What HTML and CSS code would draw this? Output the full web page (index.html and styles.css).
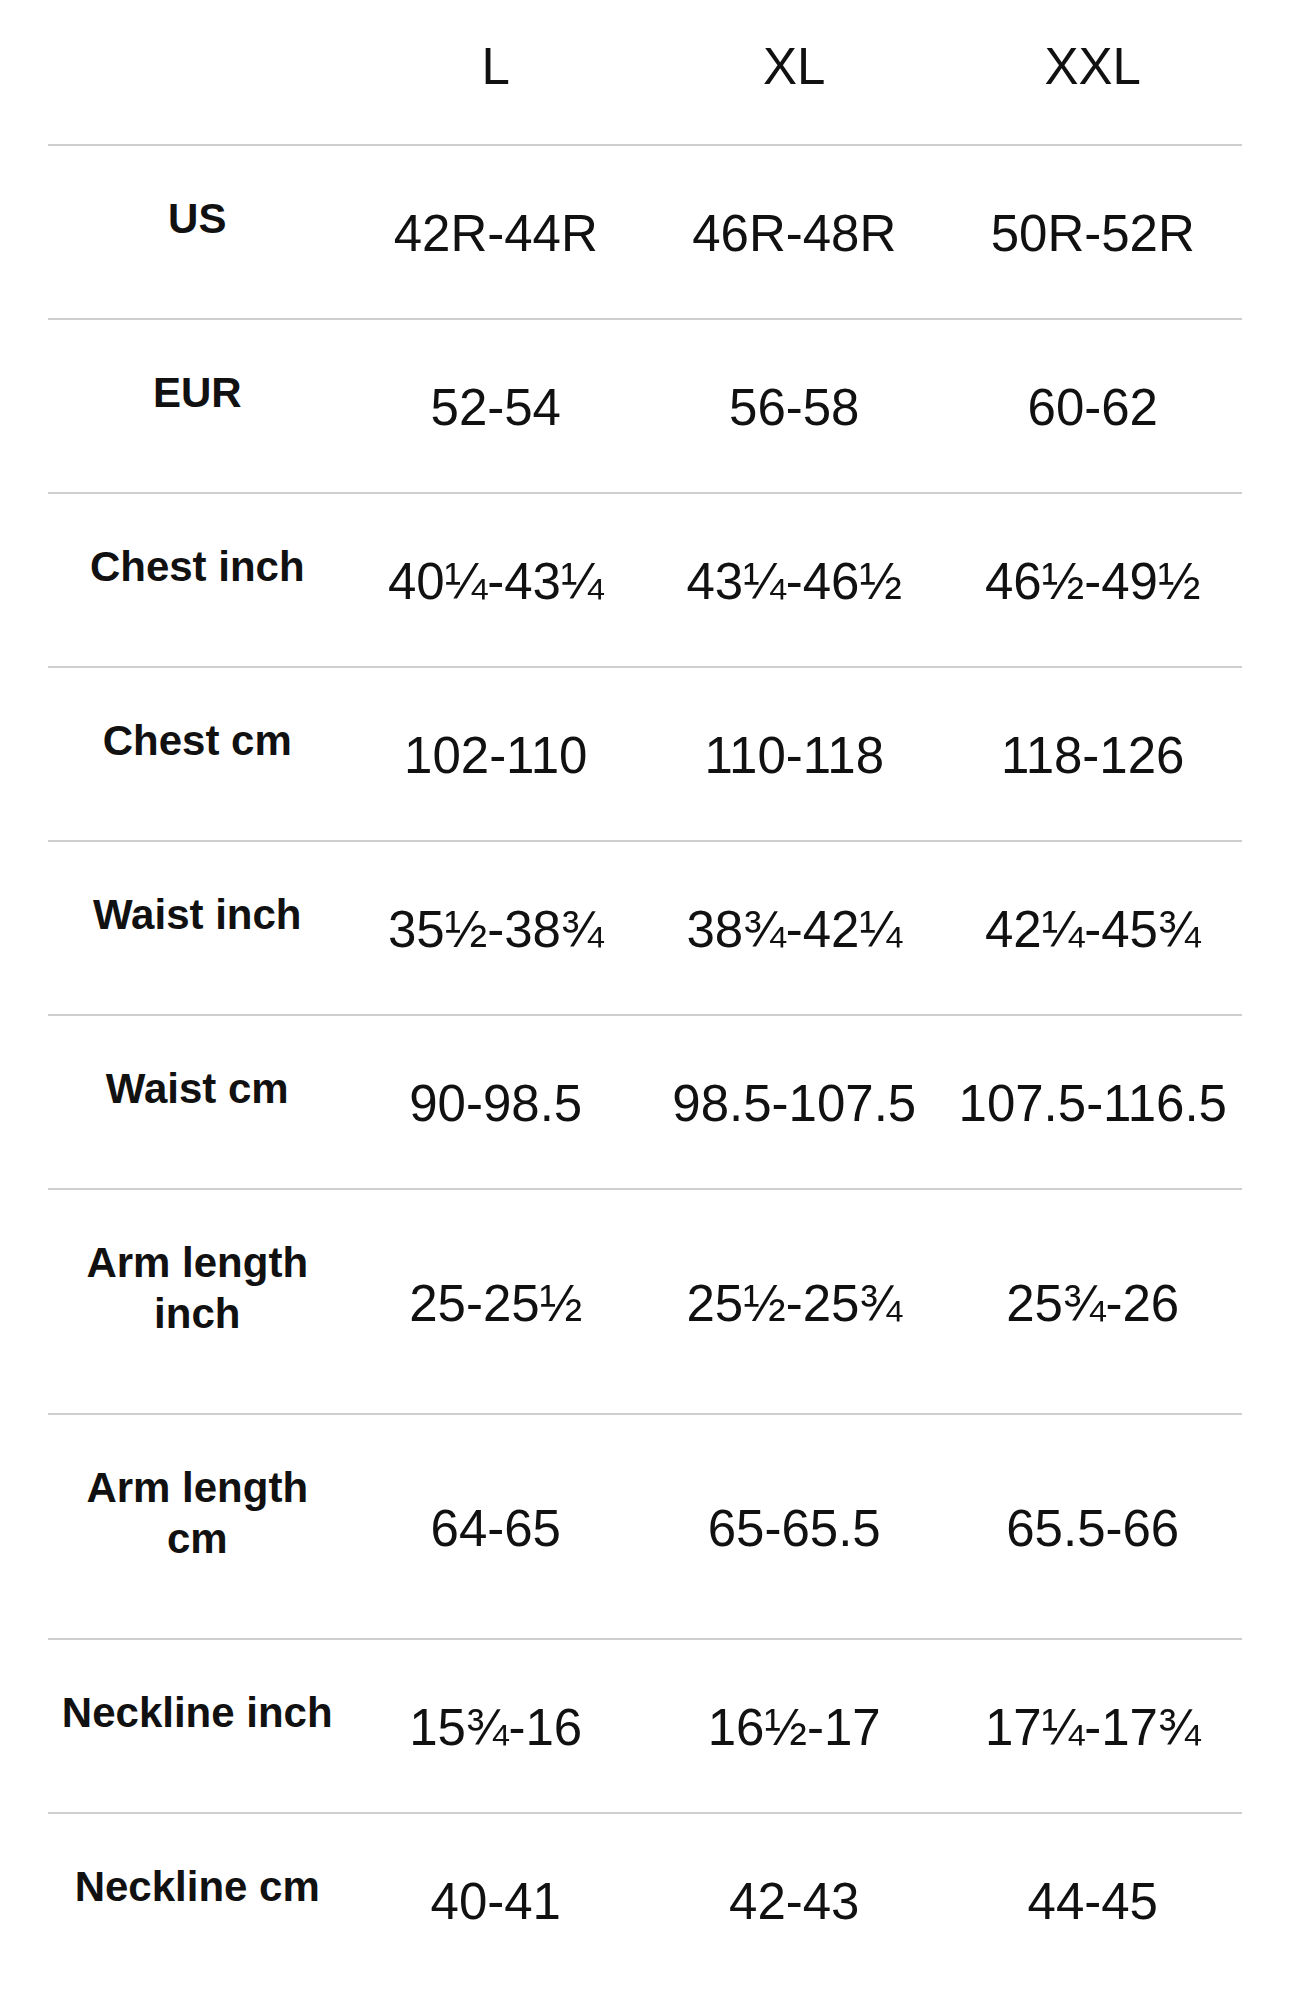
FILE: index.html
```html
<!DOCTYPE html>
<html lang="en">
<head>
<meta charset="utf-8">
<title>Size chart</title>
<link rel="stylesheet" href="styles.css">
</head>
<body>
<table class="size-table">
  <thead>
    <tr>
      <th class="corner"></th>
      <th class="size">L</th>
      <th class="size">XL</th>
      <th class="size">XXL</th>
    </tr>
  </thead>
  <tbody>
    <tr><th class="label">US</th><td class="val">42R-44R</td><td class="val">46R-48R</td><td class="val">50R-52R</td></tr>
    <tr><th class="label">EUR</th><td class="val">52-54</td><td class="val">56-58</td><td class="val">60-62</td></tr>
    <tr><th class="label">Chest inch</th><td class="val">40¼-43¼</td><td class="val">43¼-46½</td><td class="val">46½-49½</td></tr>
    <tr><th class="label">Chest cm</th><td class="val">102-110</td><td class="val">110-118</td><td class="val">118-126</td></tr>
    <tr><th class="label">Waist inch</th><td class="val">35½-38¾</td><td class="val">38¾-42¼</td><td class="val">42¼-45¾</td></tr>
    <tr><th class="label">Waist cm</th><td class="val">90-98.5</td><td class="val">98.5-107.5</td><td class="val">107.5-116.5</td></tr>
    <tr><th class="label">Arm length inch</th><td class="val">25-25½</td><td class="val">25½-25¾</td><td class="val">25¾-26</td></tr>
    <tr><th class="label">Arm length cm</th><td class="val">64-65</td><td class="val">65-65.5</td><td class="val">65.5-66</td></tr>
    <tr><th class="label">Neckline inch</th><td class="val">15¾-16</td><td class="val">16½-17</td><td class="val">17¼-17¾</td></tr>
    <tr><th class="label">Neckline cm</th><td class="val">40-41</td><td class="val">42-43</td><td class="val">44-45</td></tr>
  </tbody>
</table>
</body>
</html>
```
FILE: styles.css
```css
html, body {
  margin: 0;
  padding: 0;
  background: #ffffff;
}

body {
  font-family: "Liberation Sans", Arial, sans-serif;
  color: #111111;
}

.size-table {
  margin-left: 48px;
  width: 1194px;
  border-collapse: collapse;
  table-layout: fixed;
}

.size-table th,
.size-table td {
  width: 25%;
  text-align: center;
  padding: 0;
}

.size {
  font-weight: 400;
  font-size: 51px;
  line-height: 52px;
  height: 145px;
  vertical-align: middle;
  padding-bottom: 10px !important;
  box-sizing: border-box;
}

.size-table tbody tr {
  border-top: 2px solid #cfcfcf;
}

.label {
  font-weight: 700;
  font-size: 42px;
  line-height: 51px;
  vertical-align: top;
  padding: 47px 10px 74px !important;
}

.val {
  font-weight: 400;
  font-size: 51px;
  line-height: 52px;
  vertical-align: middle;
  white-space: nowrap;
  padding-top: 4px !important;
}
```
